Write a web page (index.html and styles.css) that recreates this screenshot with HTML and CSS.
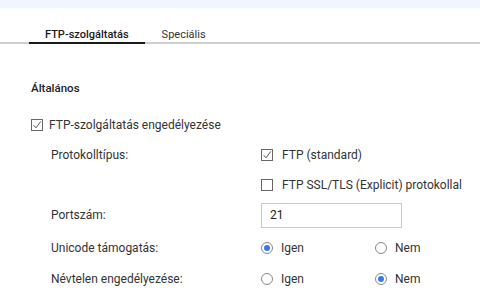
FILE: index.html
```html
<!DOCTYPE html>
<html lang="hu">
<head>
    <meta charset="UTF-8">
    <title>FTP-szolgáltatás</title>
    <link rel="stylesheet" href="styles.css">
</head>
<body>
    <div class="topbar"></div>

    <nav class="tabs">
        <div class="tab active">FTP-szolgáltatás</div>
        <div class="tab">Speciális</div>
    </nav>

    <main class="panel">
        <h2>Általános</h2>

        <label class="check main-check">
            <svg class="box" width="12" height="12" viewBox="0 0 12 12"><rect x="0.5" y="0.5" width="11" height="11" fill="#fff" stroke="#666"/><path d="M2.6 6.2 L5 8.8 L9.8 2.4" fill="none" stroke="#555" stroke-width="1"/></svg>
            FTP-szolgáltatás engedélyezése
        </label>

        <div class="form">
            <div class="row">
                <div class="label">Protokolltípus:</div>
                <div class="field stack">
                    <label class="check">
                        <svg class="box" width="12" height="12" viewBox="0 0 12 12"><rect x="0.5" y="0.5" width="11" height="11" fill="#fff" stroke="#666"/><path d="M2.6 6.2 L5 8.8 L9.8 2.4" fill="none" stroke="#555" stroke-width="1"/></svg>
                        FTP (standard)
                    </label>
                    <label class="check">
                        <svg class="box" width="12" height="12" viewBox="0 0 12 12"><rect x="0.5" y="0.5" width="11" height="11" fill="#fff" stroke="#666"/></svg>
                        FTP SSL/TLS (Explicit) protokollal
                    </label>
                </div>
            </div>

            <div class="row">
                <div class="label">Portszám:</div>
                <div class="field">
                    <input class="text-input" type="text" value="21">
                </div>
            </div>

            <div class="row">
                <div class="label">Unicode támogatás:</div>
                <div class="field radios">
                    <label class="radio"><span class="dot on"></span>Igen</label>
                    <label class="radio"><span class="dot"></span>Nem</label>
                </div>
            </div>

            <div class="row">
                <div class="label">Névtelen engedélyezése:</div>
                <div class="field radios">
                    <label class="radio"><span class="dot"></span>Igen</label>
                    <label class="radio"><span class="dot on"></span>Nem</label>
                </div>
            </div>
        </div>
    </main>
</body>
</html>
```

FILE: styles.css
```css
/* Alap */
* {
    margin: 0;
    padding: 0;
    box-sizing: border-box;
}

body {
    font-family: Roboto, "Noto Sans", sans-serif;
    font-size: 12px;
    color: #333;
    background: #fff;
    width: 480px;
    height: 296px;
    overflow: hidden;
}

.topbar {
    height: 8px;
    background-color: #f0f5fe;
}

/* Fülek */
.tabs {
    display: flex;
    margin-top: 19px;
    padding-left: 29px;
    border-bottom: 2px solid #cfcfcf;
}

.tab {
    padding: 0 17px;
    height: 15px;
    line-height: 15px;
    font-size: 11px;
    font-weight: 400;
    color: #333;
}

.tab.active {
    font-weight: 500;
    color: #1a1a1a;
    padding: 0 16px;
    border-bottom: 2px solid #1a1a1a;
    margin-bottom: -2px;
    height: 17px;
}

/* Panel */
.panel {
    padding-left: 31px;
}

.panel h2 {
    font-size: 11.5px;
    font-weight: 500;
    color: #222;
    margin-top: 36px;
    line-height: 16px;
}

.check {
    display: flex;
    align-items: center;
    gap: 9px;
    height: 30px;
}

.main-check {
    margin-top: 14px;
    gap: 6px;
}

.box {
    flex: none;
}

/* Űrlap sorok */
.form {
    padding-left: 20px;
}

.row {
    display: grid;
    grid-template-columns: 210px 1fr;
    align-items: center;
    min-height: 30px;
}

.row:nth-child(3) {
    min-height: 33px;
    padding-top: 2px;
}

.row:nth-child(4) {
    min-height: 31px;
}

.label {
    line-height: 30px;
}

.stack {
    display: flex;
    flex-direction: column;
}

.row:first-child .label {
    align-self: start;
}

.text-input {
    width: 141px;
    height: 25px;
    border: 1px solid #c8c8c8;
    padding: 0 8px;
    font-family: Roboto, sans-serif;
    font-size: 12px;
    color: #222;
    outline: none;
}

.radios {
    display: flex;
}

.radio {
    display: flex;
    align-items: center;
    gap: 8px;
    width: 114px;
}

.dot {
    width: 12px;
    height: 12px;
    border: 1px solid #888;
    border-radius: 50%;
    display: flex;
    align-items: center;
    justify-content: center;
}

.dot.on::after {
    content: "";
    width: 6px;
    height: 6px;
    border-radius: 50%;
    background: #3a78e8;
}
```
